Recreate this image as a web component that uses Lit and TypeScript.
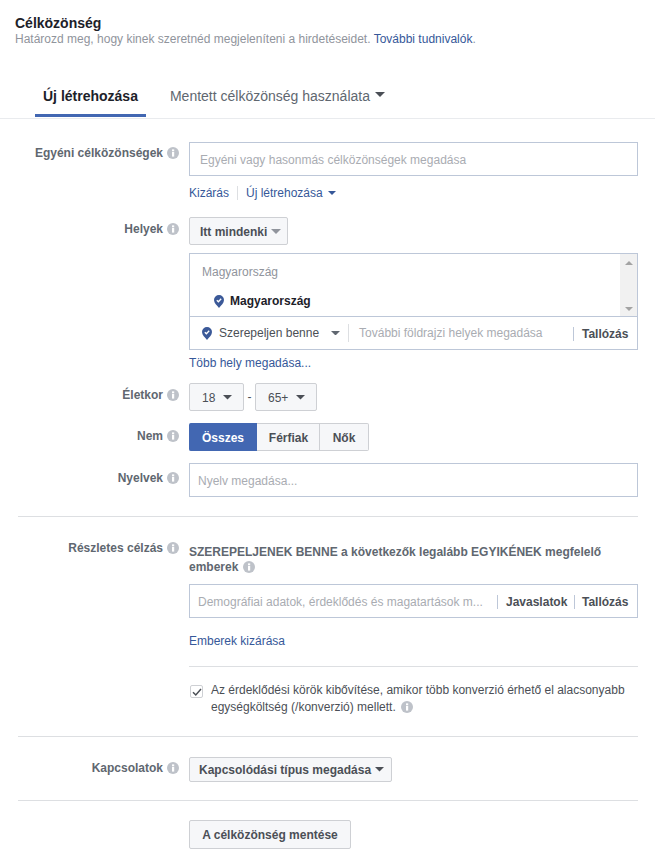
import { LitElement, html, css, svg } from "lit";
import { customElement } from "lit/decorators.js";

const info = html`<svg class="info" viewBox="0 0 12 12" width="12" height="12" aria-hidden="true"><circle cx="6" cy="6" r="6" fill="#bec2c9"/><rect x="5" y="5" width="2.2" height="4.6" fill="#fff"/><rect x="5" y="2.4" width="2.2" height="1.9" fill="#fff"/></svg>`;
const pin = html`<svg class="pin" viewBox="0 0 10 13" width="10" height="13" aria-hidden="true"><path d="M5 0a5 5 0 0 1 5 5c0 3-3 5.500-5 8-2-2.500-5-5-5-8a5 5 0 0 1 5-5z" fill="#3b5998"/>${svg`<path d="M2.800 5.200l1.600 1.600 2.800-3" fill="none" stroke="#fff" stroke-width="1.300"/>`}</svg>`;
const caret = (c = "#4b4f56", w = 10) => html`<svg class="caret" viewBox="0 0 10 5" width=${w} height=${w / 2} aria-hidden="true"><path d="M0 0h10L5 5z" fill=${c}/></svg>`;

@customElement("app-root")
export class AppRoot extends LitElement {
  static styles = css`
    :host { display: block; width: 655px; height: 855px; overflow: hidden; background: #fff; font-family: "Liberation Sans", Arial, sans-serif; font-size: 12px; color: #4b4f56; }
    * { box-sizing: border-box; }
    .head { padding: 15px 0 0 15px; }
    .title { font-size: 14px; line-height: 16px; font-weight: 700; color: #1d2129; }
    .sub { line-height: 16px; color: #90949c; }
    a { color: #365899; text-decoration: none; }
    .tabs { display: flex; margin-top: 29px; padding-left: 35px; border-bottom: 1px solid #e9ebee; height: 43px; }
    .tab { height: 41px; padding: 11px 8px 0; font-size: 14px; line-height: 18px; color: #606770; display: flex; align-items: flex-start; }
    .tab.on { font-weight: 700; color: #1d2129; border-bottom: 3px solid #4267b2; }
    .tab.alt { margin-left: 16px; gap: 5px; }
    .tab.alt .caret { margin-top: 5px; width: 10px; height: 5px; }
    .body { padding: 23px 17px 0 18px; }
    .row { display: grid; grid-template-columns: 171px 449px; }
    .label { display: flex; align-items: flex-start; justify-content: flex-end; gap: 4px; padding-right: 10px; font-weight: 700; color: #606770; line-height: 16px; }
    .label .info { margin-top: 2px; flex: none; }
    .p3 { padding-top: 3px; } .p4 { padding-top: 4px; } .p5 { padding-top: 5px; } .p7 { padding-top: 7px; }
    .col { display: flex; flex-direction: column; align-items: flex-start; min-width: 0; }
    .input { width: 449px; height: 34px; border: 1px solid #bdc7d8; display: flex; align-items: center; background: #fff; padding-top: 1px; }
    .ph { color: #a9acb2; white-space: nowrap; }
    .ph1 { padding-left: 10px; }
    .links { display: flex; align-items: center; height: 16px; margin-top: 9px; line-height: 16px; }
    .links .sep { width: 1px; height: 14px; background: #dddfe2; margin: 0 8px; }
    .links .caret { margin-left: 5px; width: 8px; height: 4px; }
    .btn { display: inline-flex; align-items: center; background: #f6f7f9; border: 1px solid #ced0d4; border-radius: 2px; color: #4b4f56; font-weight: 700; white-space: nowrap; }
    .m16 { margin-top: 16px; } .m12 { margin-top: 12px; }
    .dd { height: 28px; padding: 1px 0 0 10px; width: 99px; gap: 4px; }
    .box { width: 449px; height: 97px; border: 1px solid #bdc7d8; margin-top: 8px; display: flex; flex-direction: column; }
    .list { height: 63px; border-bottom: 1px solid #bdc7d8; display: flex; position: relative; }
    .list-in { flex: 1; padding-top: 10px; padding-left: 12px; }
    .list-head { line-height: 16px; color: #90949c; }
    .place { display: flex; align-items: center; gap: 6px; margin: 14px 0 0 12px; line-height: 14px; font-weight: 700; color: #1d2129; }
    .scroll { width: 17px; background: #f1f1f1; display: flex; flex-direction: column; align-items: center; justify-content: space-between; padding: 7px 0 5px; }
    .arrow { width: 0; height: 0; border-left: 4px solid transparent; border-right: 4px solid transparent; }
    .arrow.up { border-bottom: 4px solid #a3a3a3; }
    .arrow.down { border-top: 4px solid #a3a3a3; }
    .search { flex: 1; display: flex; align-items: center; padding-left: 12px; }
    .inc { margin-left: 7px; color: #4b4f56; white-space: nowrap; }
    .search .caret { margin-left: 12px; width: 9px; height: 4.500px; }
    .vsep { width: 1px; background: #dddfe2; flex: none; }
    .search .s1 { height: 18px; margin: 0 10px 0 8px; }
    .search .ph { flex: 1; }
    .search .s2 { height: 14px; background: #bdc7d8; margin-right: 8px; margin-top: 2px; }
    .act { font-weight: 700; color: #4b4f56; white-space: nowrap; }
    .search .act { width: 55px; margin-top: 2px; }
    .more { line-height: 16px; margin-top: 5px; }
    .age { display: flex; align-items: center; height: 28px; }
    .age .btn { height: 28px; font-weight: 400; gap: 8px; padding: 1px 0 0 12px; }
    .age .caret { width: 9px; height: 4.500px; }
    .a1 { width: 55px; } .a2 { width: 62px; }
    .dash { width: 11px; text-align: center; }
    .seg { display: flex; height: 28px; }
    .seg .btn { height: 28px; justify-content: center; border-radius: 0; border-left-width: 0; padding-top: 1px; }
    .seg .on { width: 68px; background: #4267b2; border-color: #4267b2; color: #fff; border-radius: 2px 0 0 2px; padding-left: 1px; }
    .seg .f { width: 63px; padding-left: 1px; } .seg .n { width: 49px; border-radius: 0 2px 2px 0; }
    .pad9 { padding-left: 8px; }
    .div { height: 1px; background: #dddfe2; }
    .d1 { margin-top: 19px; } 
    .detail { margin-top: 23px; }
    .lead { margin-top: 5px; line-height: 15px; font-weight: 700; color: #606770; width: 449px; }
    .lead .info { vertical-align: -2px; margin-left: 1px; }
    .i2 { margin-top: 9px; padding-left: 8px; }
    .i2 .ph { width: 291px; overflow: hidden; }
    .i2 .vsep { height: 14px; background: #bdc7d8; margin: 0 8px; }
    .i2 .j { width: 60px; }
    .i2 .last { margin: 0 7px 0 8px; }
    .excl { line-height: 16px; margin-top: 15px; }
    .sub-div { width: 449px; margin-top: 17px; }
    .check { display: flex; width: 449px; margin-top: 15px; gap: 8px; line-height: 17px; }
    .cb { flex: none; width: 13px; height: 13px; margin: 3px 0 0 1px; border: 1px solid #ced0d4; border-radius: 2px; background: #fff; display: flex; align-items: center; justify-content: center; }
    .check .info { vertical-align: -2px; margin-left: 2px; }
    .d2 { margin-top: 20px; } .d3 { margin-top: 18px; }
    .conn { margin-top: 20px; }
    .kd { height: 25px; width: 203px; padding-left: 9px; gap: 4px; }
    .kd .caret { width: 9px; height: 4.500px; }
    .save { margin-top: 19px; }
    .save .btn { height: 29px; width: 162px; justify-content: center; }
  `;

  render() {
    return html`
      <div class="head">
        <div class="title">Célközönség</div>
        <div class="sub">Határozd meg, hogy kinek szeretnéd megjeleníteni a hirdetéseidet. <a>További tudnivalók</a>.</div>
      </div>
      <div class="tabs">
        <div class="tab on">Új létrehozása</div>
        <div class="tab alt">Mentett célközönség használata ${caret("#4b4f56", 10)}</div>
      </div>
      <div class="body">
        <div class="row">
          <div class="label p3">Egyéni célközönségek ${info}</div>
          <div class="col">
            <div class="input ph1"><span class="ph">Egyéni vagy hasonmás célközönségek megadása</span></div>
            <div class="links"><a>Kizárás</a><span class="sep"></span><a>Új létrehozása</a>${caret("#365899", 8)}</div>
          </div>
        </div>
        <div class="row m16">
          <div class="label p4">Helyek ${info}</div>
          <div class="col">
            <div class="btn dd">Itt mindenki ${caret("#90949c", 10)}</div>
            <div class="box">
              <div class="list">
                <div class="list-in">
                  <div class="list-head">Magyarország</div>
                  <div class="place">${pin}Magyarország</div>
                </div>
                <div class="scroll"><span class="arrow up"></span><span class="arrow down"></span></div>
              </div>
              <div class="search">
                ${pin}<span class="inc">Szerepeljen benne</span>${caret("#606770", 9)}
                <span class="vsep s1"></span>
                <span class="ph">További földrajzi helyek megadása</span>
                <span class="vsep s2"></span><span class="act">Tallózás</span>
              </div>
            </div>
            <a class="more">Több hely megadása...</a>
          </div>
        </div>
        <div class="row m12">
          <div class="label p4">Életkor ${info}</div>
          <div class="age">
            <div class="btn a1">18 ${caret()}</div><span class="dash">-</span><div class="btn a2">65+ ${caret()}</div>
          </div>
        </div>
        <div class="row m12">
          <div class="label p5">Nem ${info}</div>
          <div class="seg">
            <div class="btn on">Összes</div><div class="btn f">Férfiak</div><div class="btn n">Nők</div>
          </div>
        </div>
        <div class="row m12">
          <div class="label p7">Nyelvek ${info}</div>
          <div class="input pad9"><span class="ph">Nyelv megadása...</span></div>
        </div>
        <div class="div d1"></div>
        <div class="row detail">
          <div class="label">Részletes célzás ${info}</div>
          <div class="col">
            <div class="lead">SZEREPELJENEK BENNE a következők legalább EGYIKÉNEK megfelelő emberek ${info}</div>
            <div class="input i2">
              <span class="ph">Demográfiai adatok, érdeklődés és magatartások m...</span>
              <span class="vsep"></span><span class="act j">Javaslatok</span>
              <span class="vsep last"></span><span class="act">Tallózás</span>
            </div>
            <a class="excl">Emberek kizárása</a>
            <div class="div sub-div"></div>
            <div class="check">
              <span class="cb"><svg viewBox="0 0 10 10" width="10" height="10" aria-hidden="true"><path d="M1 5.200l2.800 2.800L9 2" fill="none" stroke="#4b4f56" stroke-width="1.500"/></svg></span>
              <span>Az érdeklődési körök kibővítése, amikor több konverzió érhető el alacsonyabb egységköltség (/konverzió) mellett. ${info}</span>
            </div>
          </div>
        </div>
        <div class="div d2"></div>
        <div class="row conn">
          <div class="label p3">Kapcsolatok ${info}</div>
          <div class="col"><div class="btn kd">Kapcsolódási típus megadása ${caret("#4b4f56", 9)}</div></div>
        </div>
        <div class="div d3"></div>
        <div class="row save">
          <div></div>
          <div class="col"><div class="btn">A célközönség mentése</div></div>
        </div>
      </div>
    `;
  }
}
